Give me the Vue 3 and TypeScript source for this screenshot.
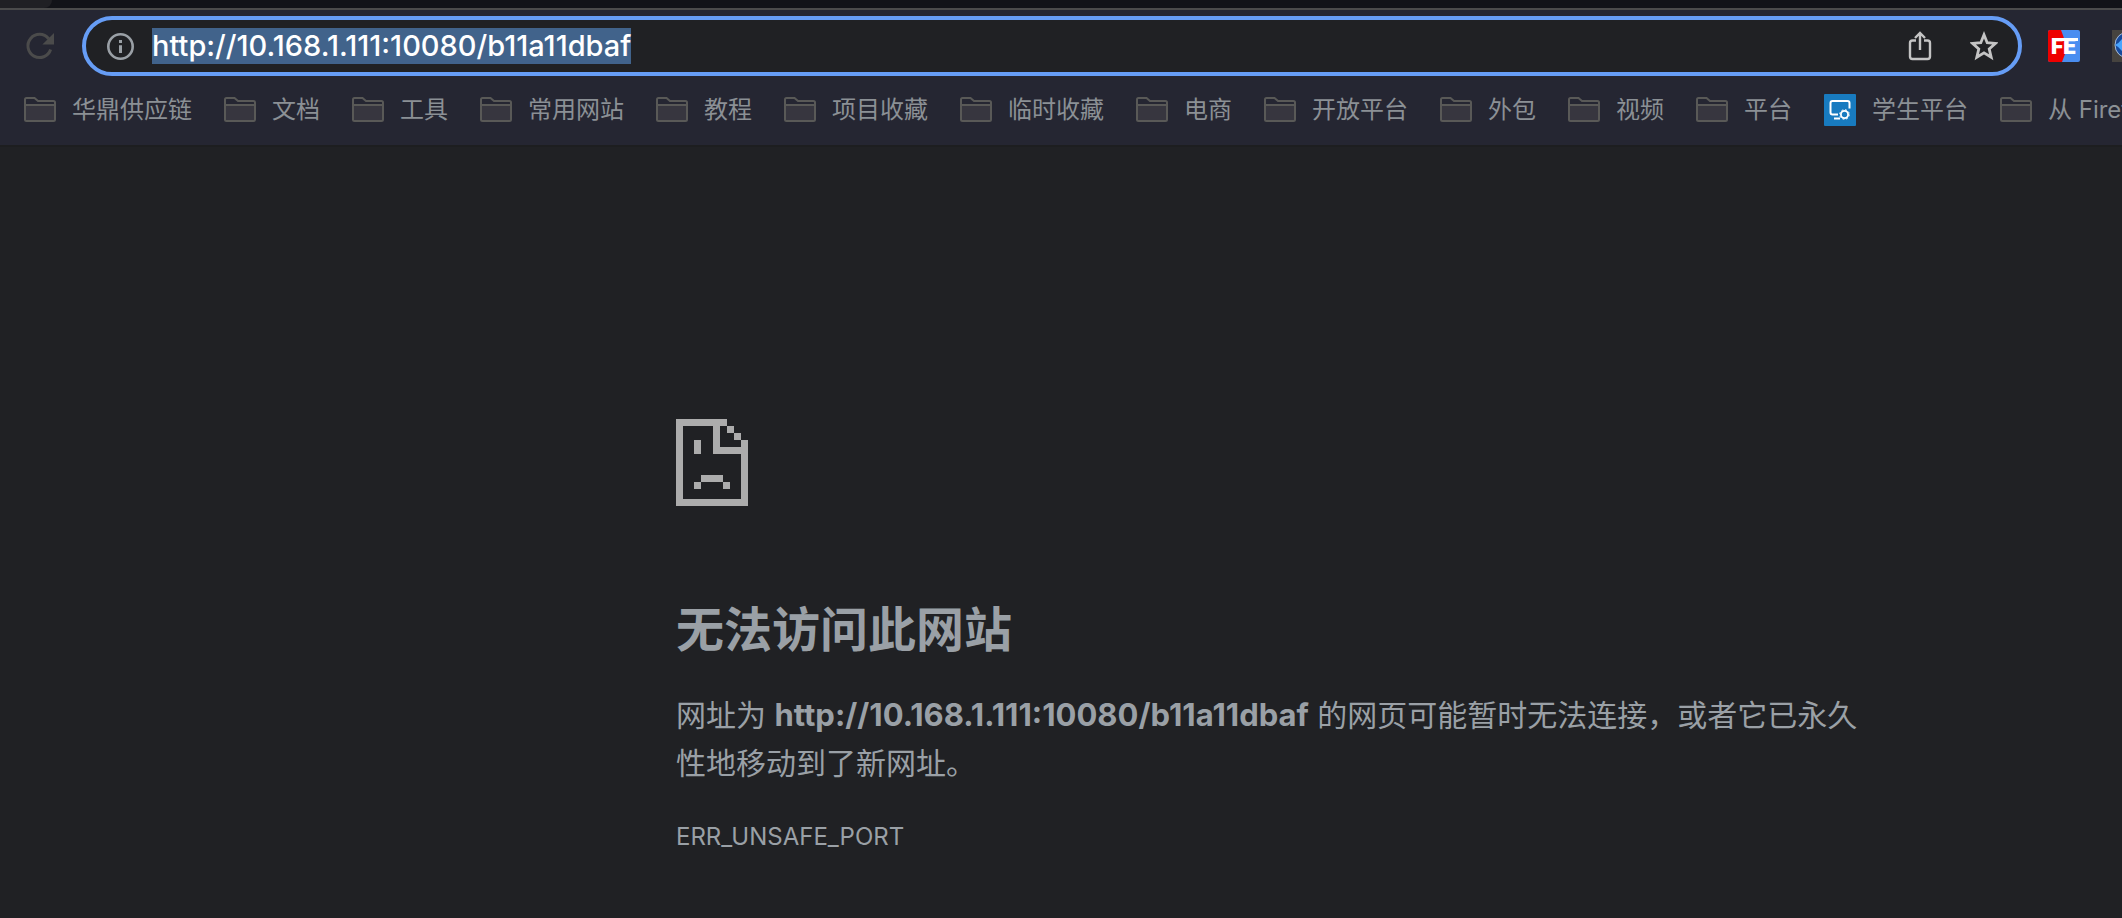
<script setup lang="ts">
import { onMounted, ref } from 'vue'

interface Bookmark {
  label: string
  kind: 'folder' | 'site'
}

const url = ref('http://10.168.1.111:10080/b11a11dbaf')
const address = ref<HTMLInputElement | null>(null)

const bookmarks: Bookmark[] = [
  { label: '华鼎供应链', kind: 'folder' },
  { label: '文档', kind: 'folder' },
  { label: '工具', kind: 'folder' },
  { label: '常用网站', kind: 'folder' },
  { label: '教程', kind: 'folder' },
  { label: '项目收藏', kind: 'folder' },
  { label: '临时收藏', kind: 'folder' },
  { label: '电商', kind: 'folder' },
  { label: '开放平台', kind: 'folder' },
  { label: '外包', kind: 'folder' },
  { label: '视频', kind: 'folder' },
  { label: '平台', kind: 'folder' },
  { label: '学生平台', kind: 'site' },
  { label: '从 Firefox 导入', kind: 'folder' },
]

onMounted(() => {
  address.value?.focus()
  address.value?.select()
})
</script>

<template>
  <div class="window">
    <header class="chrome">
      <div class="tabstrip"><div class="tab"></div></div>

      <div class="toolbar">
        <button class="icon-button" type="button" aria-label="重新加载">
          <svg width="32" height="32" viewBox="0 0 32 32">
            <path d="M26.6 19.5A11.6 11.6 0 1 1 24.6 8.7" fill="none" stroke="#4b4b4b" stroke-width="3" />
            <path d="M30 3v11.6H18.4z" fill="#4b4b4b" />
          </svg>
        </button>

        <div class="omnibox">
          <button class="icon-button" type="button" aria-label="查看网站信息">
            <svg width="28" height="28" viewBox="0 0 28 28">
              <circle cx="14.5" cy="14.5" r="12.2" fill="none" stroke="#9aa0a6" stroke-width="2.6" />
              <path d="M13 8h3v3h-3zM13 13.2h3V21h-3z" fill="#9aa0a6" />
            </svg>
          </button>
          <input ref="address" v-model="url" class="address" type="text" aria-label="地址栏" spellcheck="false" />
          <button class="icon-button share" type="button" aria-label="分享">
            <svg width="24" height="32" viewBox="0 0 24 32">
              <g fill="none" stroke="#c4c4c4" stroke-width="2.4">
                <path d="M8 10.5H4.5A2.5 2.5 0 0 0 2 13v13.5A2.5 2.5 0 0 0 4.5 29h15a2.5 2.5 0 0 0 2.5-2.5V13a2.5 2.5 0 0 0-2.5-2.5H16" />
                <path d="M12 20V3.5M7 8l5-5 5 5" />
              </g>
            </svg>
          </button>
          <button class="icon-button" type="button" aria-label="为此标签页添加书签">
            <svg width="28" height="32" viewBox="0 0 28 32">
              <path d="M14 4.8l3.2 7.9 8.3.7-6.3 5.5 2 8.3-7.2-4.4-7.2 4.4 2-8.3-6.3-5.5 8.3-.7z" fill="none" stroke="#c4c4c4" stroke-width="2.8" />
            </svg>
          </button>
        </div>

        <div class="extensions">
          <button class="icon-button" type="button" aria-label="FeHelper">
            <svg width="32" height="32" viewBox="0 0 32 32">
              <rect width="32" height="32" rx="2" fill="#4a8df0" />
              <path d="M2 0h11q6 14 4 24l-3 8H2q-2 0-2-2V2q0-2 2-2z" fill="#ee0000" />
              <text x="3" y="24" class="fe">FE</text>
              <path d="M8 8h22v3H8z" fill="#fff" />
            </svg>
          </button>
          <button class="icon-button" type="button" aria-label="扩展程序">
            <svg width="32" height="32" viewBox="0 0 32 32">
              <rect width="32" height="32" fill="#46433f" />
              <circle cx="16" cy="15" r="13" fill="#174a9c" stroke="#a9bdd8" stroke-width="1" />
              <path d="M3 15q4-2 7-6l6-2v16q-4 0-7-3-2-3-6-5z" fill="#48a5ff" />
            </svg>
          </button>
        </div>
      </div>

      <nav class="bookmarks" aria-label="书签栏">
        <a v-for="item in bookmarks" :key="item.label" class="bookmark" href="#">
          <svg v-if="item.kind === 'folder'" width="32" height="32" viewBox="0 0 32 32">
            <path d="M1 11h30v15H1z" fill="#37363f" />
            <path d="M1 26V5.500Q1 4 2.500 4h8l3.500 3h15.500Q31 7 31 8.500V25.500Q31 27 29.500 27h-27Q1 27 1 25.500zM1 11h30" fill="none" stroke="#595957" stroke-width="2" />
          </svg>
          <svg v-else width="32" height="32" viewBox="0 0 32 32">
            <rect width="32" height="32" rx="1" fill="#187bc0" />
            <path d="M14 20.5H8.5a2 2 0 0 1-2-2V9a2 2 0 0 1 2-2h15a2 2 0 0 1 2 2v5.5M10 24.5h6" fill="none" stroke="#fff" stroke-width="2" />
            <circle cx="20.5" cy="20.5" r="3.6" fill="none" stroke="#fff" stroke-width="1.8" />
            <circle cx="20.5" cy="20.5" r="4.8" fill="none" stroke="#fff" stroke-width="1" stroke-dasharray="1.9 1.87" />
          </svg>
          <span>{{ item.label }}</span>
        </a>
      </nav>
    </header>

    <main class="page">
      <article class="error">
        <svg class="sad" width="72" height="87" viewBox="0 0 72 87" shape-rendering="crispEdges" aria-hidden="true">
          <path
            fill="#acacac"
            d="M0 0h51v7h-7v21h21v-7h7v66H0zM7 7v73h58V35H37V7zM51 7h7v7h-7zM58 14h7v7h-7zM18 21h7v14h-7zM25 56h22v7H25zM18 63h7v7h-7zM47 63h7v7h-7z"
          />
        </svg>
        <h1>无法访问此网站</h1>
        <p>网址为 <strong>{{ url }}</strong> 的网页可能暂时无法连接，或者它已永久性地移动到了新网址。</p>
        <div class="code">ERR_UNSAFE_PORT</div>
      </article>
    </main>
  </div>
</template>

<style>
body {
  margin: 0;
  background: #202124;
}
</style>

<style scoped>
.window {
  min-height: 100vh;
  overflow: hidden;
  background: #202124;
  color: #9aa0a6;
  font-family: Inter, "Noto Sans CJK SC", sans-serif;
}

.chrome {
  background: #252632;
  border-bottom: 2px solid #1d1e20;
}

.tabstrip {
  height: 8px;
  background: #121318;
  border-bottom: 2px solid #4b4b4b;
}

.tab {
  width: 52px;
  height: 8px;
  background: #202024;
  border-bottom-right-radius: 8px;
}

.toolbar {
  display: flex;
  align-items: center;
  gap: 26px;
  padding: 6px 0 0 24px;
}

.icon-button {
  display: flex;
  flex: none;
  padding: 0;
  border: 0;
  background: none;
}

.omnibox {
  display: flex;
  flex: 1;
  align-items: center;
  box-sizing: border-box;
  min-width: 0;
  height: 60px;
  padding: 0 20px;
  border: 4px solid #669df6;
  border-radius: 30px;
  background: #202124;
}

.address {
  flex: 1;
  min-width: 0;
  height: 36px;
  margin: 0 18px;
  padding: 0;
  border: 0;
  outline: 0;
  background: none;
  color: #fff;
  font: 500 29px/36px Inter, "Noto Sans CJK SC", sans-serif;
}

.address::selection {
  background: #41638b;
  color: #fff;
}

.share {
  margin-right: 38px;
}

.extensions {
  display: flex;
  flex: none;
  gap: 32px;
  width: 74px;
  overflow: hidden;
}

.fe {
  fill: #fff;
  font: 900 21px Inter, sans-serif;
}

.bookmarks {
  display: flex;
  align-items: center;
  gap: 32px;
  height: 68px;
  padding: 0 0 1px 24px;
  overflow: hidden;
}

.bookmark {
  display: flex;
  flex: none;
  align-items: center;
  gap: 16px;
  color: #8b9095;
  font-size: 24px;
  line-height: 32px;
  text-decoration: none;
  white-space: nowrap;
}

.page {
  display: grid;
  grid-template-columns: 676fr 1200fr 246fr;
  padding-top: 272px;
}

.error {
  grid-column: 2;
}

.sad {
  display: block;
}

h1 {
  margin: 94px 0 31px;
  font-size: 48px;
  font-weight: 700;
  line-height: 60px;
}

p {
  margin: 0;
  font-size: 30px;
  line-height: 48px;
}

strong {
  font-size: 31px;
}

.code {
  margin-top: 34px;
  font-size: 24px;
  line-height: 32px;
}
</style>
